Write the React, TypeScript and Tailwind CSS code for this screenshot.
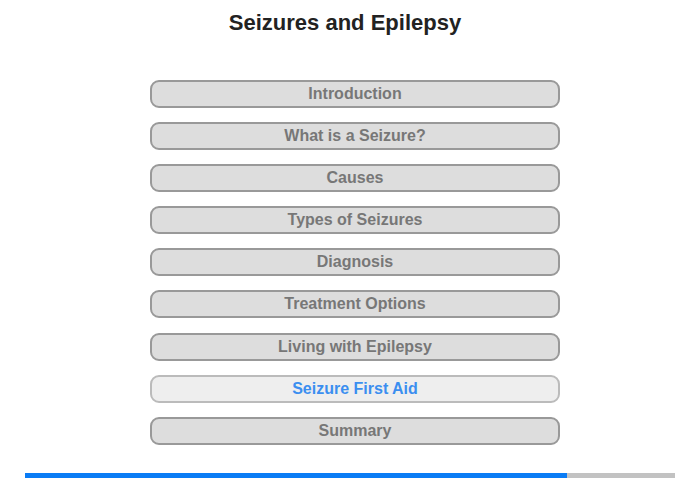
const sections = [
  "Introduction",
  "What is a Seizure?",
  "Causes",
  "Types of Seizures",
  "Diagnosis",
  "Treatment Options",
  "Living with Epilepsy",
  "Seizure First Aid",
  "Summary",
];

const current = 7;

export default function App() {
  return (
    <div className="w-[700px] h-[480px] bg-white font-['Liberation_Sans',Arial,sans-serif] flex flex-col">
      <h1 className="pt-[10px] pr-[10px] text-center text-[22px] leading-[26px] font-bold text-[#222]">
        Seizures and Epilepsy
      </h1>
      <div className="mt-[44px] pl-[10px] flex flex-col items-center gap-[14.1px]">
        {sections.map((s, i) => (
          <button
            key={s}
            className={
              i === current
                ? "w-[410px] h-[28px] rounded-[9px] border-2 border-[#bbb] bg-[#eee] text-[16px] font-bold text-[#3b8ef0]"
                : "w-[410px] h-[28px] rounded-[9px] border-2 border-[#999] bg-[#ddd] text-[16px] font-bold text-[#777]"
            }
          >
            {s}
          </button>
        ))}
      </div>
      <div className="mt-auto mb-[2px] mx-[25px] h-[5px] bg-[#c2c2c2]">
        <div className="h-full w-[542px] bg-[#0a7cf5]" />
      </div>
    </div>
  );
}
